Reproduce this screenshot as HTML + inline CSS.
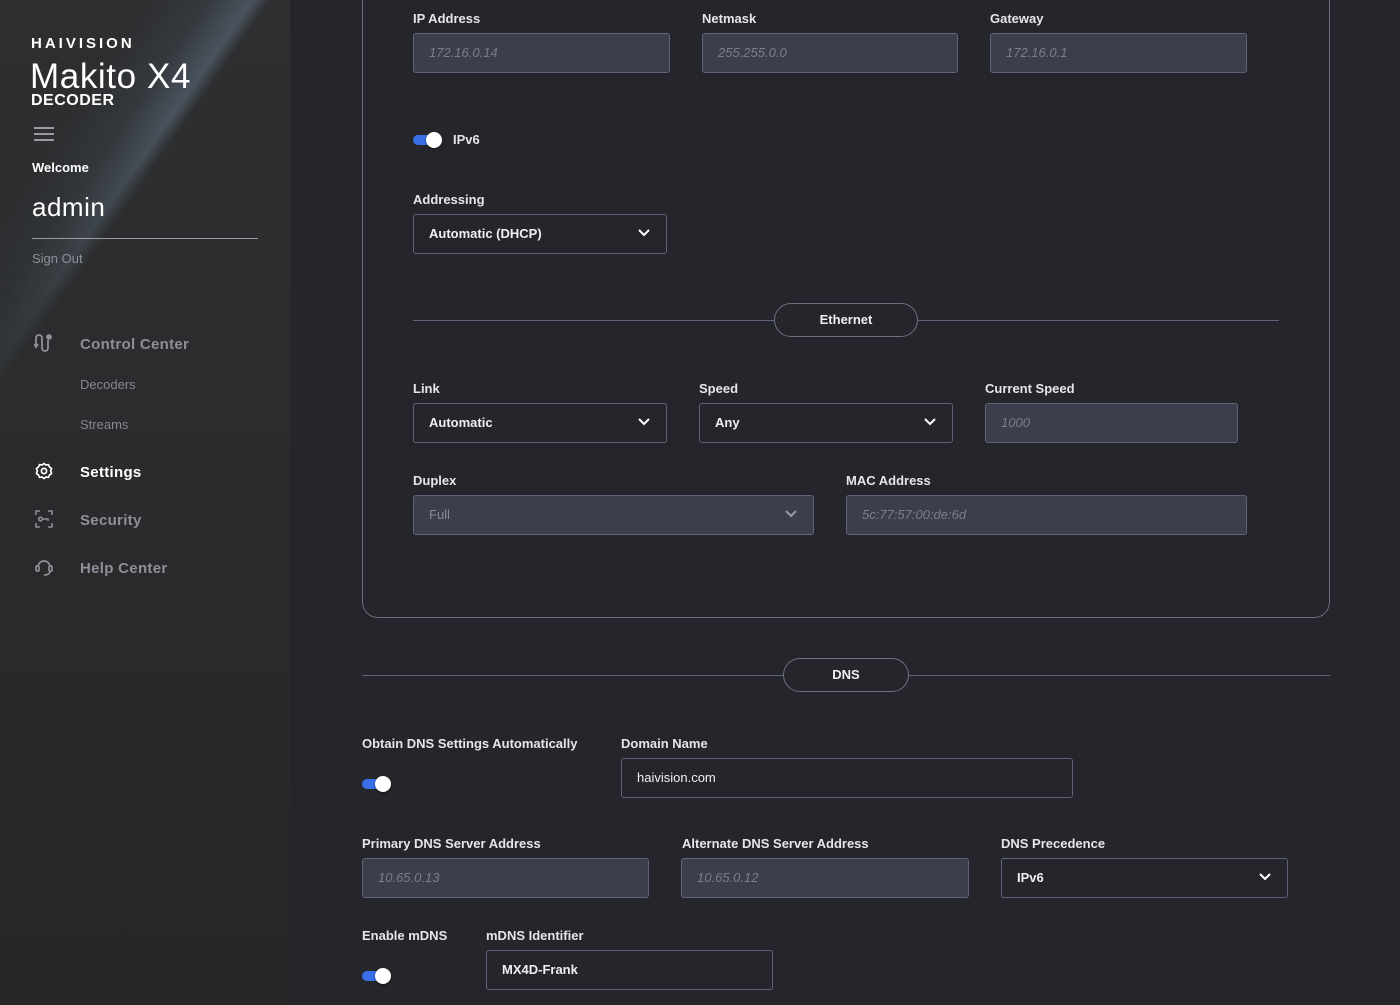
<!DOCTYPE html>
<html><head><meta charset="utf-8"><style>
*{box-sizing:border-box;margin:0;padding:0}
body{width:1400px;height:1005px;overflow:hidden;background:#25262b;font-family:"Liberation Sans",sans-serif;position:relative;color:#e8e8ea}
.side{position:absolute;left:0;top:0;width:290px;height:1005px;background:linear-gradient(180deg,#2e2f31 0%,#2a2b2c 50%,#262727 100%);overflow:hidden}
.streak{position:absolute;left:55px;top:-200px;width:100px;height:700px;transform:rotate(35deg);background:linear-gradient(90deg,rgba(110,140,170,0) 0%,rgba(110,140,170,.12) 50%,rgba(140,170,200,.3) 85%,rgba(120,150,180,0) 100%);-webkit-mask-image:linear-gradient(180deg,#000 40%,transparent 95%);mask-image:linear-gradient(180deg,#000 40%,transparent 95%)}
.s{position:absolute;white-space:nowrap}
.lbl{position:absolute;font-size:13px;font-weight:bold;color:#e6e6e9;white-space:nowrap}
.in{position:absolute;height:40px;border:1px solid #62637a;border-radius:3px;font-size:13px;padding-left:15px;line-height:38px;white-space:nowrap}
.dis{background:#3d3e4b;color:#7c7d8a;font-style:italic}
.sel{background:#25262b;color:#f0f0f2;font-weight:bold}
.sel.dis{background:#3d3e4b;font-style:normal;font-weight:normal;color:#8a8b96}
.chev{position:absolute;right:16px;top:14px}
.tog{position:absolute;width:30px;height:20px}
.tog .tr{position:absolute;left:0;top:5px;width:24px;height:10px;border-radius:5px;background:#3a6fe8}
.tog .kn{position:absolute;left:13px;top:2px;width:16px;height:16px;border-radius:50%;background:#fff;box-shadow:0 1px 2px rgba(0,0,0,.5)}
.hr{position:absolute;height:1px;background:#62637a}
.pill{position:absolute;height:34px;border:1px solid #6e6f82;border-radius:17px;background:#25262b;text-align:center;line-height:32px;font-size:13px;font-weight:bold;color:#eee}
.nav{position:absolute;left:80px;font-size:15px;color:#8e8f98;font-weight:bold;letter-spacing:.3px}
.sub{position:absolute;left:80px;font-size:13px;color:#86878f}
</style></head><body>
<div class="side">
<div class="streak"></div>
<div class="s" style="left:31px;top:35px;font-size:15px;font-weight:bold;letter-spacing:3px;color:#fff">HAIVISION</div>
<div class="s" style="left:30px;top:57px;font-size:35px;color:#fff;letter-spacing:.6px">Makito X4</div>
<div class="s" style="left:31px;top:92px;font-size:16px;font-weight:bold;color:#fff;letter-spacing:.5px">DECODER</div>
<div class="s" style="left:34px;top:127px;width:20px;height:2px;background:#999aa3;box-shadow:0 6px 0 #999aa3,0 12px 0 #999aa3"></div>
<div class="s" style="left:32px;top:160px;font-size:13px;font-weight:bold;color:#fff">Welcome</div>
<div class="s" style="left:32px;top:192px;font-size:26px;color:#fff;letter-spacing:.5px">admin</div>
<div class="s" style="left:32px;top:238px;width:226px;height:1px;background:#9a9aa6"></div>
<div class="s" style="left:32px;top:251px;font-size:13px;color:#8e8f98">Sign Out</div>
<svg class="s" style="left:34px;top:334px" width="20" height="18" viewBox="0 0 20 18" fill="none" stroke="#8e8f98" stroke-width="1.8"><path d="M2 12V4a3 3 0 0 1 6 0v10a3 3 0 0 0 6 0V6"/><path d="M0 10l2 3 2-3"/><circle cx="15" cy="3" r="2" fill="#8e8f98"/></svg>
<div class="nav" style="top:336px">Control Center</div>
<div class="sub" style="top:377px">Decoders</div>
<div class="sub" style="top:417px">Streams</div>
<svg class="s" style="left:35px;top:462px" width="18" height="18" viewBox="0 0 18 18" fill="none" stroke="#fff" stroke-width="1.7"><path d="M9 1.5l2 1.5 2.5-.3 1 2.3 2 1.5-.8 2.5.8 2.5-2 1.5-1 2.3-2.5-.3-2 1.5-2-1.5-2.5.3-1-2.3-2-1.5.8-2.5L1.5 6.5l2-1.5 1-2.3 2.5.3z"/><circle cx="9" cy="9" r="2.6"/></svg>
<div class="nav" style="top:464px;color:#fff">Settings</div>
<svg class="s" style="left:35px;top:510px" width="18" height="18" viewBox="0 0 18 18" fill="none" stroke="#8e8f98" stroke-width="1.6"><path d="M1 5V1h4M13 1h4v4M17 13v4h-4M5 17H1v-4"/><circle cx="5.5" cy="9" r="1.8"/><path d="M7.5 9H13v2"/></svg>
<div class="nav" style="top:512px">Security</div>
<svg class="s" style="left:34px;top:557px" width="20" height="20" viewBox="0 0 20 20" fill="none" stroke="#8e8f98" stroke-width="1.7"><path d="M4 10a6 6 0 0 1 12 0"/><rect x="2" y="9" width="3" height="5" rx="1"/><rect x="15" y="9" width="3" height="5" rx="1"/><path d="M16 14c0 3-3 4-6 4"/></svg>
<div class="nav" style="top:560px">Help Center</div>
</div>

<div style="position:absolute;left:362px;top:-20px;width:968px;height:638px;border:1px solid #6a6b7e;border-radius:16px"></div>

<div class="lbl" style="left:413px;top:11px">IP Address</div>
<div class="in dis" style="left:413px;top:33px;width:257px">172.16.0.14</div>
<div class="lbl" style="left:702px;top:11px">Netmask</div>
<div class="in dis" style="left:702px;top:33px;width:256px">255.255.0.0</div>
<div class="lbl" style="left:990px;top:11px">Gateway</div>
<div class="in dis" style="left:990px;top:33px;width:257px">172.16.0.1</div>

<div class="tog" style="left:413px;top:130px"><div class="tr"></div><div class="kn"></div></div>
<div class="lbl" style="left:453px;top:132px">IPv6</div>

<div class="lbl" style="left:413px;top:192px">Addressing</div>
<div class="in sel" style="left:413px;top:214px;width:254px">Automatic (DHCP)<svg class="chev" width="12" height="8" viewBox="0 0 12 8"><path d="M1 1l5 5 5-5" fill="none" stroke="#fff" stroke-width="2"/></svg></div>

<div class="hr" style="left:413px;top:320px;width:866px"></div>
<div class="pill" style="left:774px;top:303px;width:144px">Ethernet</div>

<div class="lbl" style="left:413px;top:381px">Link</div>
<div class="in sel" style="left:413px;top:403px;width:254px">Automatic<svg class="chev" width="12" height="8" viewBox="0 0 12 8"><path d="M1 1l5 5 5-5" fill="none" stroke="#fff" stroke-width="2"/></svg></div>
<div class="lbl" style="left:699px;top:381px">Speed</div>
<div class="in sel" style="left:699px;top:403px;width:254px">Any<svg class="chev" width="12" height="8" viewBox="0 0 12 8"><path d="M1 1l5 5 5-5" fill="none" stroke="#fff" stroke-width="2"/></svg></div>
<div class="lbl" style="left:985px;top:381px">Current Speed</div>
<div class="in dis" style="left:985px;top:403px;width:253px">1000</div>

<div class="lbl" style="left:413px;top:473px">Duplex</div>
<div class="in sel dis" style="left:413px;top:495px;width:401px">Full<svg class="chev" width="12" height="8" viewBox="0 0 12 8"><path d="M1 1l5 5 5-5" fill="none" stroke="#9a9ba6" stroke-width="2"/></svg></div>
<div class="lbl" style="left:846px;top:473px">MAC Address</div>
<div class="in dis" style="left:846px;top:495px;width:401px">5c:77:57:00:de:6d</div>

<div class="hr" style="left:362px;top:675px;width:968px"></div>
<div class="pill" style="left:783px;top:658px;width:126px">DNS</div>

<div class="lbl" style="left:362px;top:736px">Obtain DNS Settings Automatically</div>
<div class="tog" style="left:362px;top:774px"><div class="tr"></div><div class="kn"></div></div>
<div class="lbl" style="left:621px;top:736px">Domain Name</div>
<div class="in sel" style="left:621px;top:758px;width:452px;font-weight:normal">haivision.com</div>

<div class="lbl" style="left:362px;top:836px">Primary DNS Server Address</div>
<div class="in dis" style="left:362px;top:858px;width:287px">10.65.0.13</div>
<div class="lbl" style="left:682px;top:836px">Alternate DNS Server Address</div>
<div class="in dis" style="left:681px;top:858px;width:288px">10.65.0.12</div>
<div class="lbl" style="left:1001px;top:836px">DNS Precedence</div>
<div class="in sel" style="left:1001px;top:858px;width:287px">IPv6<svg class="chev" width="12" height="8" viewBox="0 0 12 8"><path d="M1 1l5 5 5-5" fill="none" stroke="#fff" stroke-width="2"/></svg></div>

<div class="lbl" style="left:362px;top:928px">Enable mDNS</div>
<div class="tog" style="left:362px;top:966px"><div class="tr"></div><div class="kn"></div></div>
<div class="lbl" style="left:486px;top:928px">mDNS Identifier</div>
<div class="in sel" style="left:486px;top:950px;width:287px">MX4D-Frank</div>
</body></html>
